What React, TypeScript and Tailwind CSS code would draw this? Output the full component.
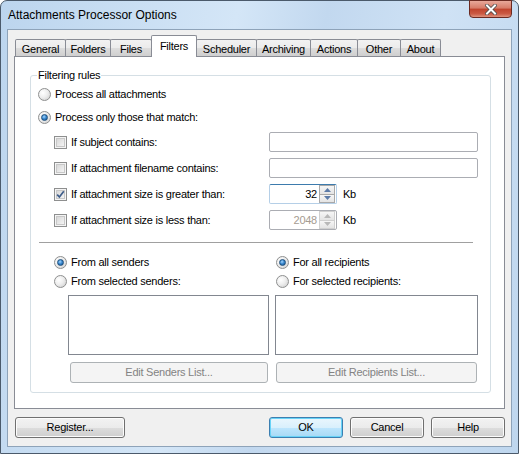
import React from "react";

const font = "font-['Liberation_Sans',Arial,sans-serif] text-[11px] tracking-[-0.25px] leading-[13px] text-black";

function Radio({ checked }: { checked?: boolean }) {
  return (
    <span className="relative flex w-[13px] h-[13px] shrink-0 items-center justify-center rounded-full border border-[#8e8f8f] bg-[radial-gradient(circle_at_35%_35%,#ffffff_0%,#eeeeee_45%,#c9c9c9_100%)]">
      {checked && (
        <span className="w-[7px] h-[7px] rounded-full border border-[#1e4f7c] bg-[radial-gradient(circle_at_40%_35%,#a5d6ff_0%,#3c8ad0_45%,#0d4c8a_100%)]" />
      )}
    </span>
  );
}

function Check({ checked }: { checked?: boolean }) {
  return (
    <span className="relative flex w-[13px] h-[13px] shrink-0 items-center justify-center border border-[#8e8f8f] bg-[#f4f4f4]">
      <span className="w-[9px] h-[9px] border border-[#c8c8c8] bg-[linear-gradient(135deg,#d8d8d8_0%,#f4f4f4_100%)]" />
      {checked && (
        <svg className="absolute left-[1px] top-[1px]" width="9" height="9" viewBox="0 0 9 9">
          <path d="M1.2 4.6 L3.4 7 L7.8 1.2" fill="none" stroke="#3e5d8a" strokeWidth="1.7" />
        </svg>
      )}
    </span>
  );
}

function Button({ children, w, kind }: { children: React.ReactNode; w: string; kind?: "default" | "disabled" }) {
  if (kind === "disabled") {
    return (
      <div className={`${w} h-[21px] flex items-center justify-center rounded-[3px] border border-[#adb2b5] bg-[#f4f4f4] text-[#838383]`}>
        {children}
      </div>
    );
  }
  if (kind === "default") {
    return (
      <div className={`${w} h-[21px] flex items-center justify-center rounded-[3px] border border-[#3c7fb1] bg-[linear-gradient(180deg,#eaf6fd_0%,#d9f0fc_50%,#bee6fd_50%,#a7d9f5_100%)] shadow-[inset_0_0_0_1px_#68d3f7]`}>
        {children}
      </div>
    );
  }
  return (
    <div className={`${w} h-[21px] flex items-center justify-center rounded-[3px] border border-[#707070] bg-[linear-gradient(180deg,#f2f2f2_0%,#ebebeb_50%,#dddddd_50%,#cfcfcf_100%)] shadow-[inset_0_0_0_1px_#fcfcfc]`}>
      {children}
    </div>
  );
}

function Tab({ label, w, selected, first }: { label: string; w: string; selected?: boolean; first?: boolean }) {
  if (selected) {
    return (
      <div className={`${w} ${first ? "" : "-ml-px"} relative z-10 h-[22px] -mb-px flex justify-center pt-[4px] border border-b-0 border-[#898c95] bg-white rounded-t-[2px]`}>
        {label}
      </div>
    );
  }
  return (
    <div className={`${w} ${first ? "" : "-ml-px"} h-[17px] flex justify-center pt-[3px] border border-b-0 border-[#898c95] bg-[linear-gradient(180deg,#f2f2f2_0%,#ebebeb_50%,#dddddd_50%,#cfcfcf_100%)] rounded-t-[2px]`}>
      {label}
    </div>
  );
}

function Spin({ value, disabled, focused }: { value: string; disabled?: boolean; focused?: boolean }) {
  return (
    <div
      className={`w-[68px] h-[20px] flex items-center rounded-[2px] border ${
        focused ? "border-[#b5cfe7] border-t-[#3d7bad]" : "border-[#abadb3]"
      } bg-white`}
    >
      <span className={`flex-1 text-right pr-[2px] ${disabled ? "text-[#a59c92]" : "text-black"}`}>{value}</span>
      <div className="w-[16px] h-[18px] flex flex-col mr-px">
        {[0, 1].map((i) => (
          <div
            key={i}
            className={`flex-1 flex items-center justify-center border ${
              disabled ? "border-[#d0d0d0]" : "border-[#a9a9a9]"
            } ${i === 1 ? "-mt-px" : ""} bg-[linear-gradient(180deg,#f6f6f6_0%,#e4e4e4_100%)]`}
          >
            <svg width="7" height="4" viewBox="0 0 7 4">
              {i === 0 ? (
                <path d="M0 4 L3.5 0 L7 4 Z" fill={disabled ? "#b8b8b8" : "#5c7ba8"} />
              ) : (
                <path d="M0 0 L3.5 4 L7 0 Z" fill={disabled ? "#b8b8b8" : "#5c7ba8"} />
              )}
            </svg>
          </div>
        ))}
      </div>
    </div>
  );
}

export default function App() {
  return (
    <div className={`${font} w-[519px] h-[454px] flex flex-col border border-[#4b5a6b] rounded-t-[7px] bg-[linear-gradient(100deg,#bcd5ee_0%,#d4e6f7_40%,#c2d8ef_55%,#cfe2f5_75%,#bed6ee_100%)]`}>
      {/* Title bar */}
      <div className="h-[28px] flex items-start shrink-0">
        <div className="pl-[7px] pt-[7px] text-[12px] tracking-normal leading-[14px] text-black">Attachments Processor Options</div>
        <div className="ml-auto mr-[6px] w-[43px] h-[18px] -mt-px flex items-center justify-center rounded-b-[4px] border border-[#6b2a22] bg-[linear-gradient(180deg,#e8a89a_0%,#d67b68_45%,#c0432d_50%,#cb5a44_80%,#e0937e_100%)]">
          <svg width="12" height="11" viewBox="0 0 12 11">
            <path d="M2 1.5 L10 9.5 M10 1.5 L2 9.5" stroke="#4a4a4a" strokeWidth="3.6" strokeLinecap="square" />
            <path d="M2 1.5 L10 9.5 M10 1.5 L2 9.5" stroke="#ffffff" strokeWidth="2" strokeLinecap="square" />
          </svg>
        </div>
      </div>

      {/* Client area */}
      <div className="mx-[6px] mb-[6px] h-[418px] border border-[#8ea3b9] bg-[#f0f0f0] flex flex-col">
        {/* Tab strip */}
        <div className="h-[26px] flex items-end pl-[7px] shrink-0">
          <Tab label="General" w="w-[51px]" first />
          <Tab label="Folders" w="w-[46px]" />
          <Tab label="Files" w="w-[42px]" />
          <Tab label="Filters" w="w-[46px]" selected />
          <Tab label="Scheduler" w="w-[61px]" />
          <Tab label="Archiving" w="w-[55px]" />
          <Tab label="Actions" w="w-[48px]" />
          <Tab label="Other" w="w-[44px]" />
          <Tab label="About" w="w-[41px]" />
        </div>

        {/* Tab panel */}
        <div className="ml-[6px] w-[491px] h-[353px] border border-[#898c95] bg-white shrink-0">
          <div className="relative ml-[15px] mt-[18px] w-[461px] h-[318px] rounded-[3px] border border-[#d5dfe5]">
            <div className="absolute left-[6px] -top-[7px] bg-white px-px">Filtering rules</div>

            <div className="flex flex-col">
              <div className="mt-[8px] h-[20px] pl-[7px] flex items-center gap-[4px]">
                <Radio />
                <span>Process all attachments</span>
              </div>
              <div className="mt-[3px] h-[20px] pl-[7px] flex items-center gap-[4px]">
                <Radio checked />
                <span>Process only those that match:</span>
              </div>

              {[
                { label: "If subject contains:", kind: "text" },
                { label: "If attachment filename contains:", kind: "text" },
                { label: "If attachment size is greater than:", kind: "spin1", checked: true },
                { label: "If attachment size is less than:", kind: "spin2" },
              ].map((r, i) => (
                <div key={i} className={`${i === 0 ? "mt-[5px]" : "mt-[6px]"} h-[20px] pl-[23px] flex items-center`}>
                  <div className="w-[215px] flex items-center gap-[4px]">
                    <Check checked={r.checked} />
                    <span>{r.label}</span>
                  </div>
                  {r.kind === "text" && <div className="w-[209px] h-[20px] rounded-[2px] border border-[#abadb3] bg-white" />}
                  {r.kind === "spin1" && (
                    <>
                      <Spin value="32" focused />
                      <span className="ml-[6px]">Kb</span>
                    </>
                  )}
                  {r.kind === "spin2" && (
                    <>
                      <Spin value="2048" disabled />
                      <span className="ml-[6px]">Kb</span>
                    </>
                  )}
                </div>
              ))}

              <div className="mt-[12px] ml-[8px] w-[434px] h-px bg-[#a0a0a0]" />

              <div className="pl-[23px] grid grid-cols-[221px_203px]">
                <div className="flex flex-col">
                  <div className="mt-[10px] h-[18px] flex items-center gap-[4px]">
                    <Radio checked />
                    <span>From all senders</span>
                  </div>
                  <div className="mt-[1px] h-[18px] flex items-center gap-[4px]">
                    <Radio />
                    <span>From selected senders:</span>
                  </div>
                  <div className="mt-[5px] ml-[14px] w-[201px] h-[60px] border border-[#828790] bg-white" />
                  <div className="mt-[7px] ml-[16px]">
                    <Button w="w-[198px]" kind="disabled">Edit Senders List...</Button>
                  </div>
                </div>
                <div className="flex flex-col">
                  <div className="mt-[10px] ml-px h-[18px] flex items-center gap-[4px]">
                    <Radio checked />
                    <span>For all recipients</span>
                  </div>
                  <div className="mt-[1px] ml-px h-[18px] flex items-center gap-[4px]">
                    <Radio />
                    <span>For selected recipients:</span>
                  </div>
                  <div className="mt-[5px] w-[203px] h-[60px] border border-[#828790] bg-white" />
                  <div className="mt-[7px] ml-px">
                    <Button w="w-[201px]" kind="disabled">Edit Recipients List...</Button>
                  </div>
                </div>
              </div>
            </div>
          </div>
        </div>

        {/* Bottom buttons */}
        <div className="mt-[8px] pl-[7px] pr-[6px] flex items-center">
          <Button w="w-[110px]">Register...</Button>
          <div className="ml-auto flex gap-[7px]">
            <Button w="w-[74px]" kind="default">OK</Button>
            <Button w="w-[74px]">Cancel</Button>
            <Button w="w-[74px]">Help</Button>
          </div>
        </div>
      </div>
    </div>
  );
}
